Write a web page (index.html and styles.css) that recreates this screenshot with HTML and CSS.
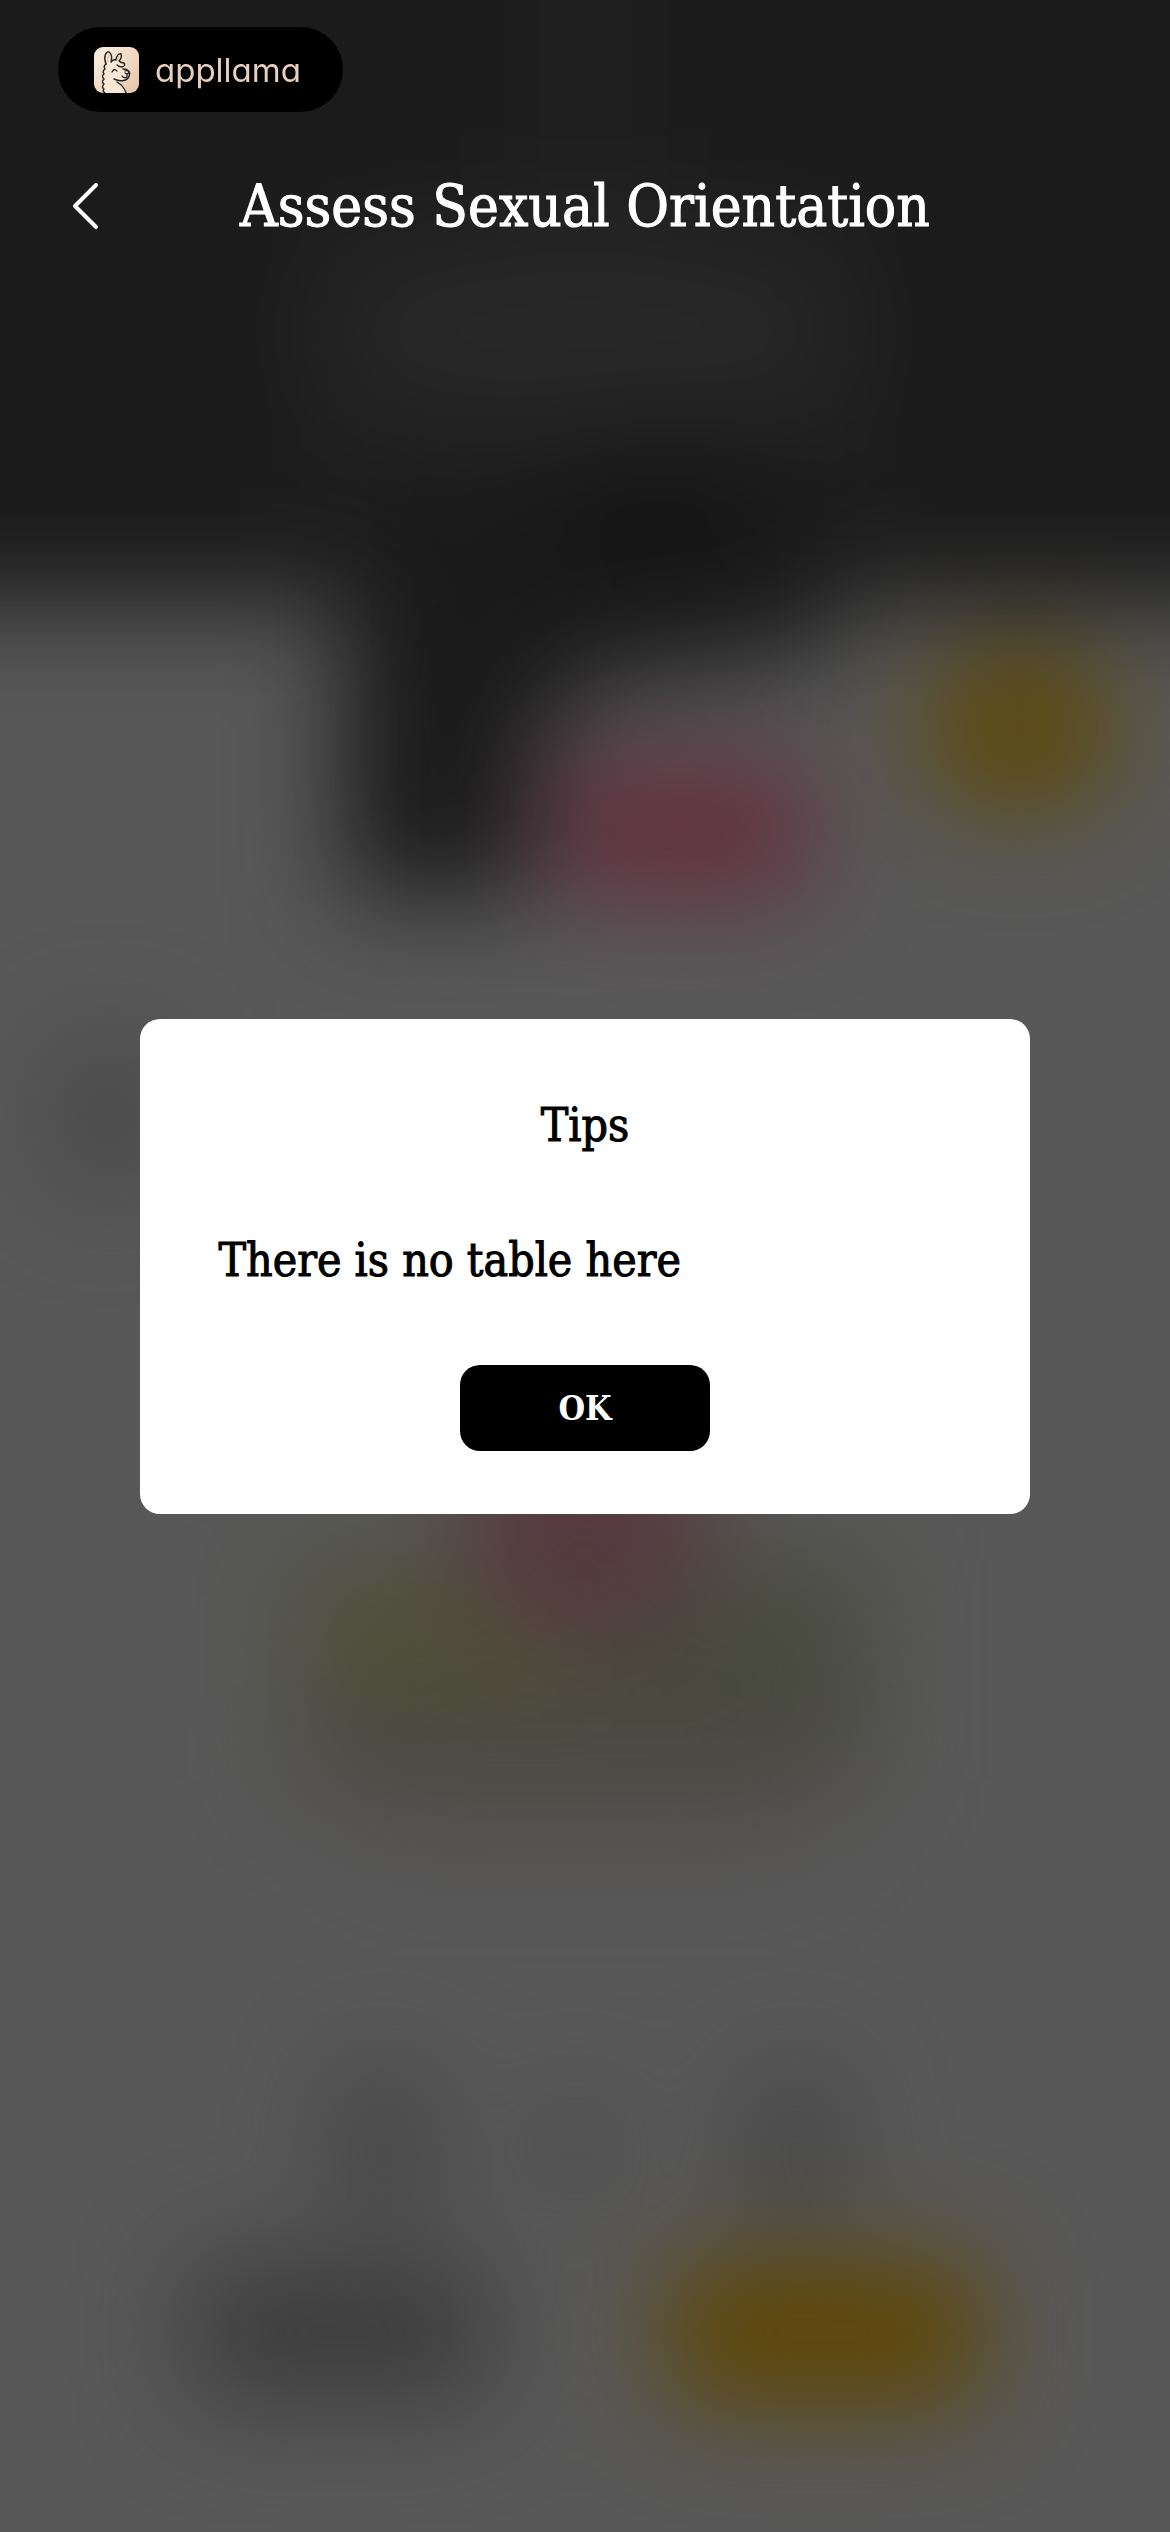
FILE: index.html
```html
<!DOCTYPE html>
<html lang="en">
<head>
    <meta charset="UTF-8">
    <meta name="viewport" content="width=device-width, initial-scale=1.0">
    <title>Assess Sexual Orientation</title>
    <link rel="stylesheet" href="styles.css">
</head>
<body>

    <!-- Blurred backdrop -->
    <svg class="backdrop" viewBox="0 0 1170 2532" preserveAspectRatio="none" aria-hidden="true">
        <defs>
            <filter id="soft" filterUnits="userSpaceOnUse" x="-300" y="-300" width="1770" height="3132" color-interpolation-filters="sRGB">
                <feGaussianBlur stdDeviation="52"/>
            </filter>
        </defs>
        <rect width="1170" height="2532" fill="#585858"/>
        <g filter="url(#soft)">
            <rect x="-300" y="-300" width="1770" height="903" fill="#1b1b1b"/>
            <rect x="300" y="200" width="570" height="400" fill="#202020"/>
            <rect x="520" y="-100" width="130" height="300" fill="#1f1f1f"/>
            <ellipse cx="585" cy="330" rx="270" ry="105" fill="#272727"/>
            <path d="M345 470H840V645Q720 670 590 680L530 750V895H345Z" fill="#1a1a1a"/>
            <ellipse cx="655" cy="510" rx="120" ry="70" fill="#151515"/>
            <rect x="555" y="765" width="255" height="130" rx="40" fill="#652e3f"/>
            <ellipse cx="1020" cy="730" rx="100" ry="82" fill="#5e4a0c"/>
            <ellipse cx="110" cy="1115" rx="60" ry="75" fill="#474747"/>
            <rect x="300" y="1560" width="290" height="180" fill="#50503a"/>
            <rect x="585" y="1560" width="280" height="180" fill="#484b3d"/>
            <rect x="300" y="1710" width="565" height="70" fill="#484640"/>
            <rect x="370" y="1780" width="430" height="60" fill="#55504e"/>
            <ellipse cx="585" cy="1530" rx="125" ry="110" fill="#56393f"/>
            <ellipse cx="382" cy="2145" rx="42" ry="80" fill="#404040"/>
            <ellipse cx="576" cy="2145" rx="34" ry="40" fill="#464646"/>
            <ellipse cx="795" cy="2145" rx="42" ry="80" fill="#414141"/>
            <rect x="190" y="2262" width="300" height="140" rx="30" fill="#3c3c3c"/>
            <rect x="668" y="2260" width="312" height="146" rx="30" fill="#5f4604"/>
        </g>
    </svg>

    <div class="screen">
        <a href="#" class="brand">
            <svg class="brand-icon" viewBox="0 0 45 46" aria-hidden="true">
                <defs>
                    <linearGradient id="sand" x1="0" y1="0" x2="1" y2="1">
                        <stop offset="0" stop-color="#fff0e0"/>
                        <stop offset="1" stop-color="#e4c5a8"/>
                    </linearGradient>
                </defs>
                <rect width="45" height="46" rx="9" fill="url(#sand)"/>
                <path d="M12 17C9 10 12 4 15 5C18 7 18 11 17 15L22 13C22 9 25 6 27 7C28 10 27 12 26 15L31 19L30 23C35 23 36 26 34 31C32 34 26 34 22 33C24 38 30 40 31 46H9C9 34 9 25 12 17Z" fill="#fae7d4"/>
                <path d="M12 17C9 10 12 4 15 5C18 7 18 11 17 15Q19 12 22 13C22 9 25 6 27 7C28 10 27 12 25 14Q27 16 30 16Q32 19 28 20Q25 20 23 18" fill="none" stroke="#202326" stroke-width="1.4" stroke-linecap="round" stroke-linejoin="round"/>
                <path d="M12 17Q9 19 11 22Q8 24 10 27Q7 29 10 32Q7 35 10 37Q7 40 10 42Q8 44 11 46M29 22C34 22 37 25 35 29C34 34 26 35 20 32M23 35Q30 39 32 46" fill="none" stroke="#202326" stroke-width="1.4" stroke-linecap="round" stroke-linejoin="round"/>
                <path d="M18 25Q20 21 23 24M31 24Q34 23 35 25Q34 28 31 26M33 27V30M28 29Q30 32 33 30" fill="none" stroke="#202326" stroke-width="1.3" stroke-linecap="round" stroke-linejoin="round"/>
                <path d="M15 8Q13 11 14 15M25 9L23 13" fill="none" stroke="#d6ad8b"/>
            </svg>
            <span class="brand-name">appllama</span>
        </a>

        <header class="page-header">
            <button type="button" class="back-btn" aria-label="Back">
                <svg viewBox="0 0 28 46" aria-hidden="true">
                    <path d="M24 2L3 23L24 44"/>
                </svg>
            </button>
            <h1>Assess Sexual Orientation</h1>
        </header>
    </div>

    <!-- Tips dialog -->
    <div class="overlay">
        <div class="dialog" role="alertdialog" aria-modal="true" aria-labelledby="tips-title" aria-describedby="tips-text">
            <h2 id="tips-title">Tips</h2>
            <p id="tips-text">There is no table here</p>
            <button type="button" class="ok-btn">OK</button>
        </div>
    </div>

</body>
</html>
```
FILE: styles.css
```css
/* General Styles */
* {
    box-sizing: border-box;
}

body {
    margin: 0;
    min-height: 100vh;
    background: #585858;
    font-family: "DejaVu Serif Condensed", "DejaVu Serif", serif;
    font-stretch: condensed;
}

button {
    font-family: inherit;
    border: none;
    cursor: pointer;
}

.backdrop {
    position: fixed;
    inset: 0;
    width: 100%;
    height: 100%;
}

/* Header */
.screen {
    position: relative;
    padding: 27px 58px;
}

.brand {
    display: inline-flex;
    align-items: center;
    gap: 16px;
    height: 85px;
    padding: 0 42px 0 36px;
    background: #000;
    border-radius: 43px;
    color: #e6cfbc;
    text-decoration: none;
}

.brand-icon {
    width: 45px;
    height: 46px;
}

.brand-name {
    font-family: Inter, sans-serif;
    font-size: 33px;
    font-weight: 400;
    line-height: 40px;
    font-feature-settings: "cv11";
}

.page-header {
    display: grid;
    grid-template-columns: 56px 1fr 56px;
    align-items: center;
    margin-top: 58px;
}

.back-btn {
    display: flex;
    padding: 0 14px;
    background: none;
}

.back-btn svg {
    width: 28px;
    height: 46px;
    fill: none;
    stroke: #fff;
    stroke-width: 4;
    stroke-linecap: round;
    stroke-linejoin: round;
}

.page-header h1 {
    margin: 0;
    color: #fff;
    font-size: 58px;
    font-weight: 400;
    line-height: 72px;
    text-align: center;
    -webkit-text-stroke: 1px currentColor;
}

/* Dialog */
.overlay {
    position: fixed;
    inset: 0;
    display: flex;
    align-items: center;
    justify-content: center;
}

.dialog {
    display: flex;
    flex-direction: column;
    align-items: center;
    width: 76%;
    padding: 76px 78px 63px;
    background: #fff;
    border-radius: 20px;
    color: #000;
}

.dialog h2,
.dialog p {
    margin: 0;
    font-size: 46px;
    font-weight: 400;
    line-height: 60px;
    -webkit-text-stroke: 1px currentColor;
}

.dialog p {
    align-self: stretch;
    margin: 75px 0;
}

.ok-btn {
    width: 250px;
    height: 86px;
    background: #000;
    border-radius: 20px;
    color: #fff;
    font-size: 34px;
    font-weight: 700;
}
```
